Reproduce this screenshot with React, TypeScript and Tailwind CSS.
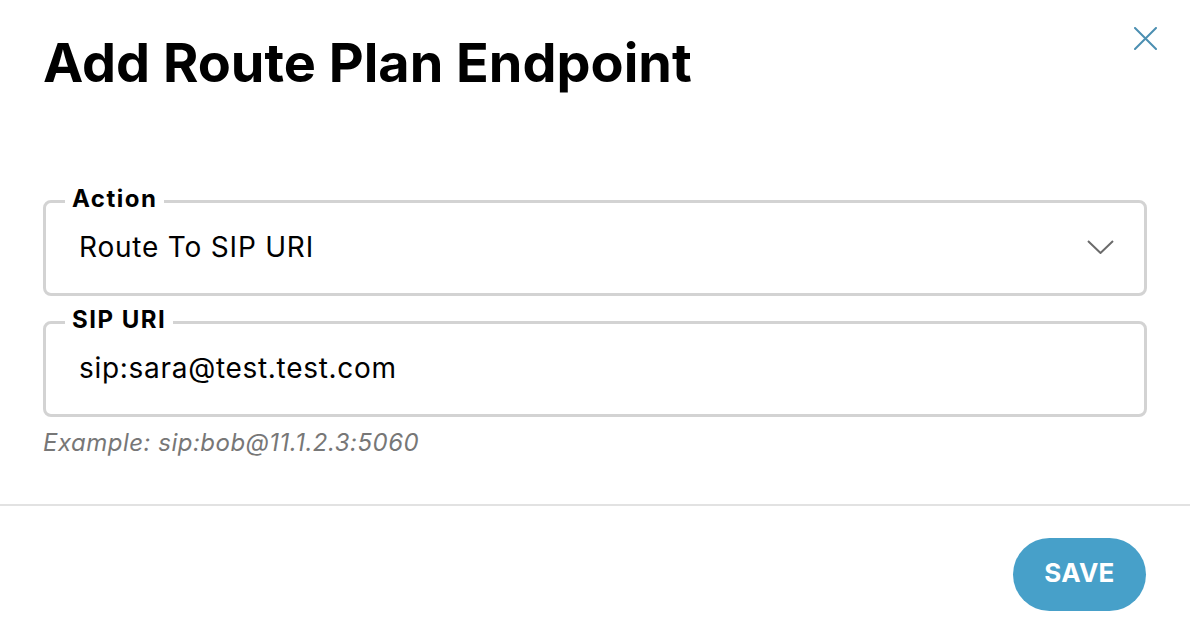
import React from 'react';

function CloseIcon() {
  return (
    <svg width="23" height="23" viewBox="0 0 23 23" fill="none">
      <path d="M1 1L22 22M22 1L1 22" stroke="#4b8fb1" strokeWidth="2" strokeLinecap="round" />
    </svg>
  );
}

function ChevronDown() {
  return (
    <svg width="27" height="14" viewBox="0 0 27 14" fill="none">
      <path d="M1 1L13.5 13L26 1" stroke="#6b6b6b" strokeWidth="2" />
    </svg>
  );
}

export default function App() {
  return (
    <div
      className="relative w-[1190px] h-[634px] bg-white text-black"
      style={{ fontFamily: 'Inter, "Noto Sans", sans-serif' }}
    >
      <button className="absolute left-[1134px] top-[27px] p-0">
        <CloseIcon />
      </button>

      <div className="px-[43px] pt-[31px]">
        <h1 className="text-[54px] leading-[64px] font-bold">Add Route Plan Endpoint</h1>

        <form className="mt-[94px]">
          <fieldset className="border-[3px] border-[#d3d3d3] rounded-[8px]">
            <legend className="relative -top-[2px] ml-[19px] px-[7px] text-[24px] leading-[24px] font-bold tracking-[1.5px]">
              Action
            </legend>
            <div className="flex h-[80px] items-center justify-between pb-[12px] pl-[33px] pr-[30px]">
              <span className="text-[28px] tracking-[0.8px]">Route To SIP URI</span>
              <ChevronDown />
            </div>
          </fieldset>

          <fieldset className="mt-[14px] border-[3px] border-[#d3d3d3] rounded-[8px]">
            <legend className="relative -top-[2px] ml-[19px] px-[7px] text-[24px] leading-[24px] font-bold tracking-[1.5px]">
              SIP URI
            </legend>
            <div className="flex h-[80px] items-center pb-[12px] pl-[33px]">
              <span className="text-[28px] tracking-[0.7px]">sip:sara@test.test.com</span>
            </div>
          </fieldset>

          <p className="mt-[8px] text-[24px] italic tracking-[0.5px] text-[#777777]">Example: sip:bob@11.1.2.3:5060</p>
        </form>
      </div>

      <div className="mt-[43px] border-t-2 border-[#e2e2e2]" />

      <div className="flex justify-end px-[44px] pt-[32px]">
        <button className="h-[73px] w-[133px] rounded-full bg-[#47a0c9] pb-[5px] text-[26px] font-bold tracking-[0.3px] text-white">
          SAVE
        </button>
      </div>
    </div>
  );
}
